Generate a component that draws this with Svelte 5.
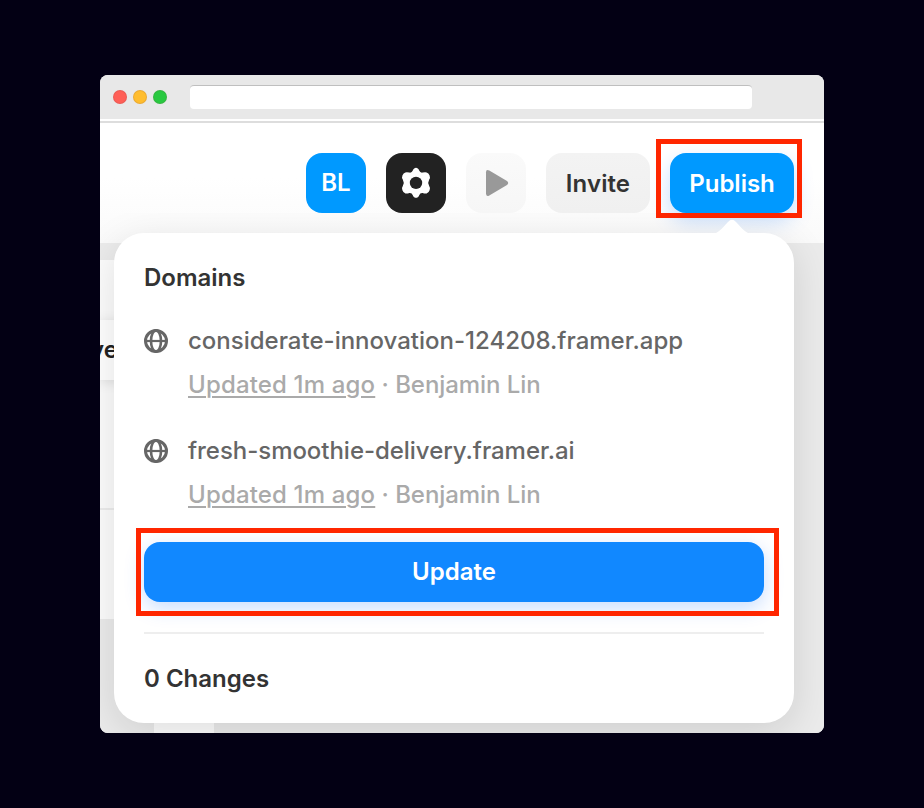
<script>
  const domains = [
    { host: 'considerate-innovation-124208.framer.app', updated: 'Updated 1m ago', author: 'Benjamin Lin', tracking: 0 },
    { host: 'fresh-smoothie-delivery.framer.ai', updated: 'Updated 1m ago', author: 'Benjamin Lin', tracking: -0.04 }
  ];
</script>

<div class="stage">
  <div class="window">
    <header class="titlebar">
      <div class="lights">
        <i class="red"></i><i class="amber"></i><i class="green"></i>
      </div>
      <div class="address"></div>
    </header>

    <nav class="toolbar">
      <div class="btn avatar">BL</div>
      <div class="btn settings">
        <svg width="32" height="32" viewBox="0 0 32 32">
          <path d="M14.2 1.4Q16 .2 17.8 1.4Q18.7 2 19.2 3.5Q20.1 6 22.6 5.6Q25.1 4.9 26.6 5.4Q28.6 6 29.6 8.5Q30.6 11 29.1 12.8Q27.4 15.8 29.1 18.8Q30.6 21 29.6 23.2Q28.6 26 26.6 26.4Q25.1 26.8 22.6 26Q20.1 25.7 19.2 28.2Q18.7 29.8 17.8 30.3Q16 31.4 14.2 30.3Q13.3 29.8 12.8 28.2Q11.9 25.7 9.4 26Q6.9 26.8 5.4 26.4Q3.4 26 2.4 23.2Q1.4 21 2.9 18.8Q4.6 15.8 2.9 12.8Q1.4 11 2.4 8.5Q3.4 6 5.4 5.4Q6.9 4.9 9.4 5.6Q11.9 6 12.8 3.5Q13.3 2 14.2 1.4Z" fill="#fff" />
          <circle cx="16" cy="15.9" r="6.2" fill="#222" />
        </svg>
      </div>
      <div class="btn play">
        <svg width="24" height="28" viewBox="0 0 24 28">
          <path d="M1 3.5Q1 -.2 4.3 1.6L22 11.9Q24.4 14 22 16.1L4.3 26.4Q1 28.2 1 24.5Z" fill="#999" />
        </svg>
      </div>
      <div class="btn invite">Invite</div>
      <div class="btn publish">Publish</div>
    </nav>

    <main class="canvas">
      <section class="page">
        <div class="pageband"><span>ve</span></div>
        <div class="pagerule"></div>
      </section>
      <div class="nextpage"></div>
    </main>
  </div>

  <div class="mark mark-publish"></div>

  <section class="popover">
    <svg class="arrow" width="40" height="15" viewBox="0 0 40 15">
      <path d="M0 15C6 14.5 8.5 11 16 3Q20 -1.6 24 3C31.5 11 34 14.5 40 15Z" fill="#fff" />
    </svg>
    <h2><span>Domains</span></h2>
    {#each domains as d}
      <article class="domain">
        <svg class="globe" width="24" height="24" viewBox="0 0 24 24" fill="none" stroke="#666" stroke-width="2.6">
          <circle cx="12" cy="12" r="10.5" stroke-width="3" />
          <ellipse cx="12" cy="12" rx="5" ry="10.6" />
          <path d="M1 12H23" stroke-width="2.2" />
        </svg>
        <div class="info">
          <div class="host" style="letter-spacing: {d.tracking}px">{d.host}</div>
          <div class="meta"><u>{d.updated}</u> · {d.author}</div>
        </div>
      </article>
    {/each}
    <div class="update">Update</div>
    <hr />
    <h2 class="changes"><span>0 Changes</span></h2>
    <div class="mark mark-update"></div>
  </section>
</div>

<style>
  .stage {
    position: relative;
    box-sizing: border-box;
    width: 924px;
    height: 808px;
    padding: 75px 100px;
    background: #030014;
    overflow: hidden;
    font-family: Inter, 'Liberation Sans', sans-serif;
    font-size: 24px;
    line-height: 30px;
  }
  .window {
    display: flex;
    flex-direction: column;
    width: 724px;
    height: 658px;
    border-radius: 8px;
    overflow: hidden;
    background: #fff;
  }
  .titlebar {
    box-sizing: border-box;
    display: flex;
    height: 44px;
    padding: 10px 0 0 13px;
    background: #e8e8e8;
  }
  .lights {
    display: flex;
    gap: 6px;
    width: 77px;
    padding-top: 5px;
  }
  .lights i {
    box-sizing: border-box;
    width: 14px;
    height: 14px;
    border-radius: 50%;
    border: 1px solid rgba(120, 70, 70, .15);
  }
  .red { background: #ff5f57; }
  .amber { background: #ffbd2e; }
  .green { background: #28c940; }
  .address {
    box-sizing: border-box;
    width: 562px;
    height: 24px;
    border-radius: 4px;
    background: #fff;
    border-top: 1px solid #bfbfbf;
  }
  .toolbar {
    box-sizing: border-box;
    display: flex;
    gap: 20px;
    flex: none;
    height: 122px;
    margin-top: 2px;
    padding: 30px 30px 0 206px;
    border-top: 2px solid #ddd;
    background: linear-gradient(#fff 45%, #fafafa);
  }
  .btn {
    display: flex;
    flex: none;
    align-items: center;
    justify-content: center;
    box-sizing: border-box;
    width: 60px;
    height: 60px;
    border-radius: 16px;
    font-weight: 600;
    color: #fff;
  }
  .avatar { background: #09f; }
  .settings { background: #222; }
  .play { background: linear-gradient(#fafafa, #f6f6f6); }
  .play svg { margin-left: 2px; }
  .invite { width: 104px; padding-top: 2px; background: linear-gradient(#f3f3f3, #f0f0f0); color: #333; letter-spacing: .1px; }
  .publish { width: 124px; padding-top: 2px; background: #09f; box-shadow: 0 8px 20px rgba(0, 110, 255, .22); }
  .canvas {
    display: flex;
    flex-direction: column;
    flex: 1;
    padding-top: 17px;
    background: #ebebeb;
  }
  .page {
    display: flow-root;
    width: 500px;
    height: 359px;
    background: #fcfcfc;
  }
  .pageband {
    display: flex;
    align-items: center;
    height: 60px;
    margin-top: 60px;
    background: #fff;
    box-shadow: 0 2px 12px rgba(0, 0, 0, .12);
    color: #222;
    font-weight: 600;
  }
  .pageband span { margin-left: -10px; }
  .pagerule { height: 2px; margin-top: 128px; background: #ececec; }
  .nextpage {
    width: 60px;
    height: 78px;
    margin: 36px 0 0 54px;
    background: #fcfcfc;
  }
  .popover {
    position: absolute;
    left: 114px;
    top: 233px;
    box-sizing: border-box;
    width: 680px;
    height: 490px;
    padding: 30px;
    border-radius: 30px;
    background: #fff;
    clip-path: inset(-20px -30px -10px -14px round 0 0 8px 8px);
    box-shadow: 0 10px 40px rgba(0, 0, 0, .12);
  }
  .arrow { position: absolute; left: 598px; top: -14px; }
  h2 {
    margin: 0;
    font-size: 24px;
    line-height: 30px;
    font-weight: 600;
    color: #333;
  }
  .domain {
    display: flex;
    gap: 20px;
    height: 80px;
    margin-top: 30px;
  }
  h2 + .domain { margin-top: 33px; }
  .globe { margin-top: 3px; }
  .host { color: #666; font-weight: 500; white-space: nowrap; }
  .meta { margin-top: 14px; color: #aaa; font-weight: 500; letter-spacing: -.06px; white-space: nowrap; }
  u { letter-spacing: .16px; text-underline-offset: 3px; text-decoration-thickness: 2px; }
  .update {
    display: flex;
    align-items: center;
    justify-content: center;
    height: 60px;
    margin-top: 26px;
    border-radius: 16px;
    background: #18f;
    box-shadow: 0 6px 20px rgba(0, 100, 255, .22);
    color: #fff;
    font-weight: 600;
  }
  hr { height: 2px; margin: 30px 0; border: 0; background: #eee; }
  .mark { position: absolute; box-sizing: border-box; border: 5px solid #ff2600; }
  .mark-publish { left: 656px; top: 139px; width: 146px; height: 79px; }
  .mark-update { left: 22px; top: 295px; width: 643px; height: 88px; }
</style>
